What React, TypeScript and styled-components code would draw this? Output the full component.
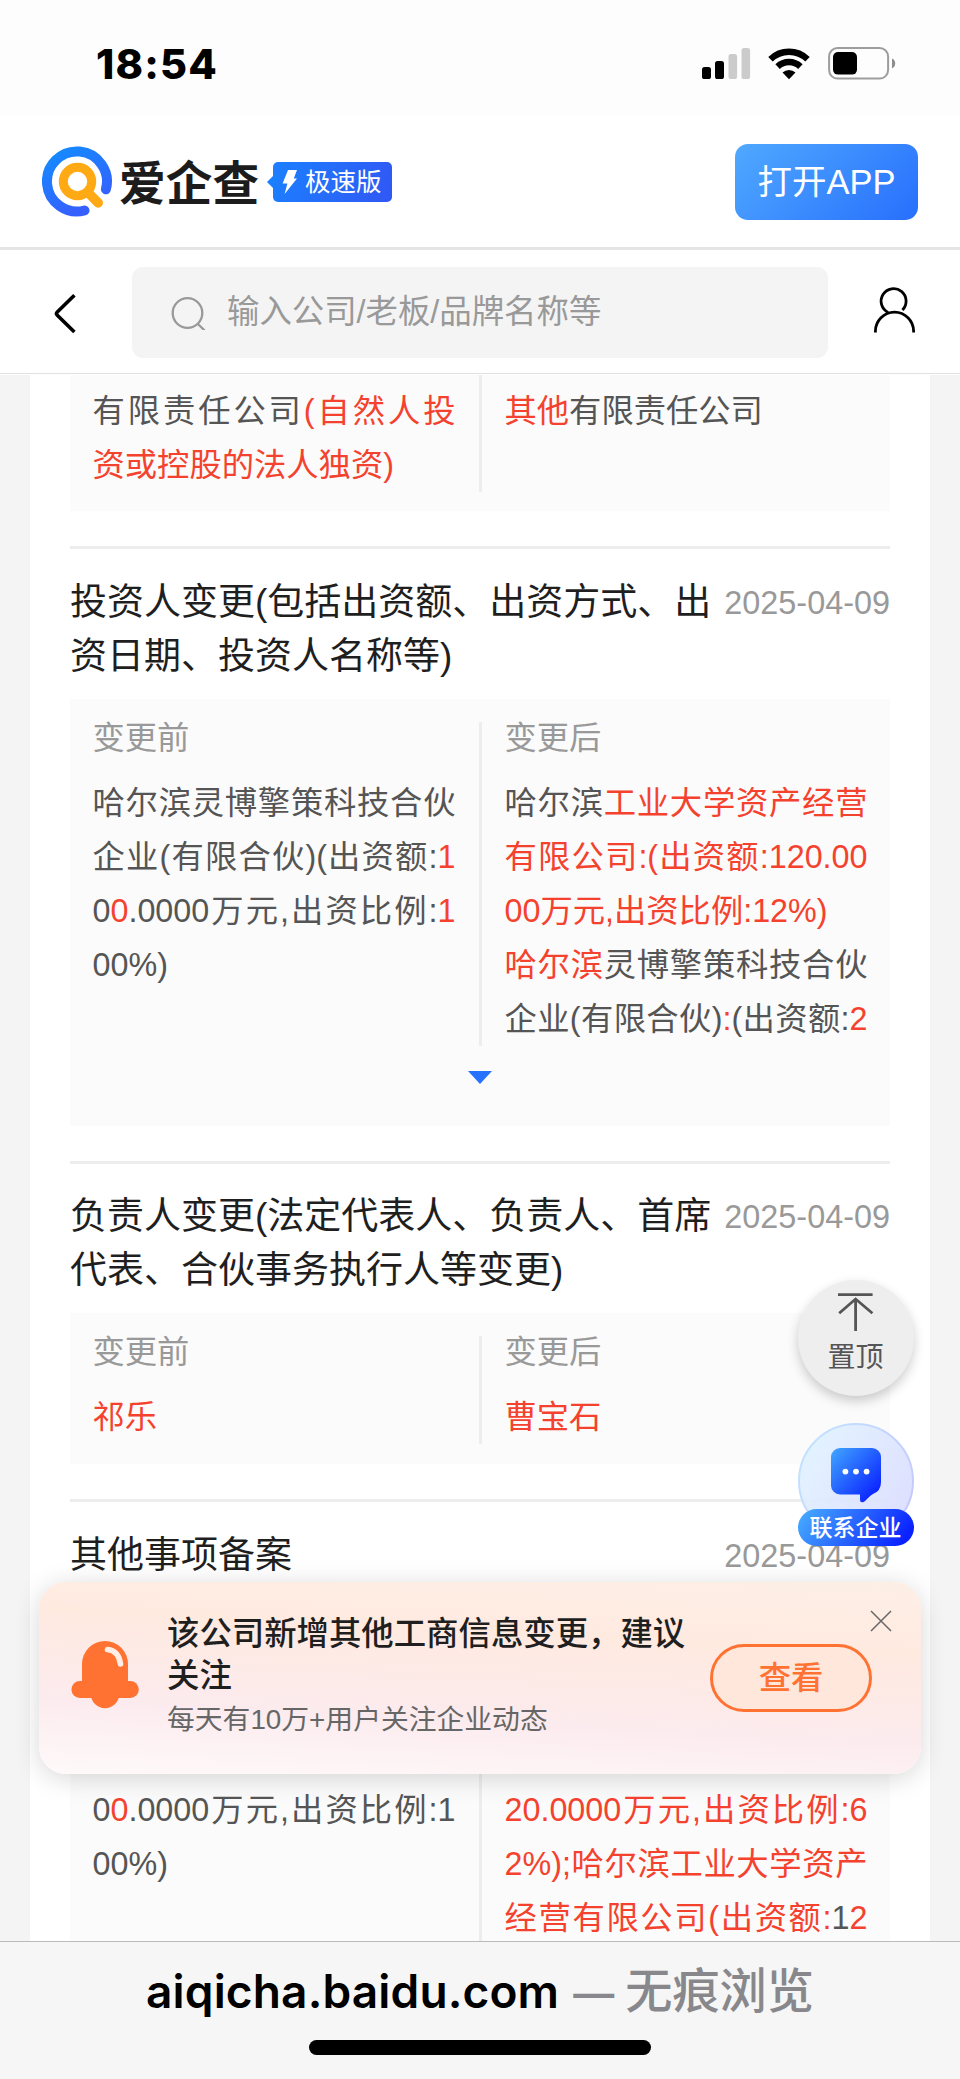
import React from "react";
import styled, { createGlobalStyle } from "styled-components";

const sans = `"Liberation Sans", "Noto Sans CJK SC", sans-serif`;

const GlobalStyle = createGlobalStyle`
  * { box-sizing: border-box; }
  body { margin: 0; background: #fff; font-family: ${sans}; }
`;

const Page = styled.div`
  position: relative;
  display: flex;
  flex-direction: column;
  width: 960px;
  height: 2079px;
  overflow: hidden;
  background: #fff;
`;

const StatusBar = styled.div`
  display: flex;
  align-items: flex-start;
  justify-content: space-between;
  height: 116px;
  padding: 39px 64px 0 96px;
  background: #fdfdfd;

  svg { margin-top: 6px; }
`;

const Clock = styled.div`
  font: 800 41.5px/50px Inter, sans-serif;
  letter-spacing: 1.2px;
  color: #000;
`;

const Header = styled.header`
  display: flex;
  align-items: center;
  justify-content: space-between;
  height: 134px;
  padding: 0 42px;
  border-bottom: 3px solid #e5e5e5;
`;

const Brand = styled.div`
  display: flex;
  align-items: center;
`;

const BrandName = styled.div`
  margin: -3px 0 0 6px;
  width: 145px;
  font: 700 46.7px/60px "Noto Sans CJK SC", sans-serif;
  color: #1c1c1c;
  white-space: nowrap;
`;

const Edition = styled.div`
  position: relative;
  display: flex;
  align-items: center;
  margin-left: 9px;
  width: 119px;
  height: 40px;
  padding-left: 9px;
  gap: 7px;
  border-radius: 5px;
  background: linear-gradient(110deg, #1b80ff, #3157f4);
  font: 400 25.5px/36px "Noto Sans CJK SC", sans-serif;
  color: #fff;
  white-space: nowrap;

  span { margin-top: -3px; }

  &::before {
    content: "";
    position: absolute;
    left: -6px;
    top: 13px;
    border: 7px solid transparent;
    border-left-width: 0;
    border-right: 7px solid #1b80ff;
  }
`;

const OpenApp = styled.button`
  width: 183px;
  height: 76px;
  padding: 0;
  border: 0;
  border-radius: 13px;
  background: linear-gradient(135deg, #50a9ff, #276ffd);
  font: 400 34.5px/76px ${sans};
  color: #fff;
`;

const SearchBar = styled.div`
  display: flex;
  align-items: center;
  height: 125px;
  padding: 1px 42px 0 50px;
  border-bottom: 1px solid #fff;
  box-shadow: inset 0 -1px 0 #e2e2e2;
`;

const SearchField = styled.div`
  display: flex;
  align-items: center;
  gap: 21px;
  width: 696px;
  height: 91px;
  margin-left: 51px;
  padding-left: 39px;
  border-radius: 11px;
  background: #f4f4f4;
  font-size: 32.4px;
  line-height: 89px;
  color: #999;
`;

const Profile = styled.div`
  display: flex;
  margin-left: auto;
  margin-bottom: 6px;
`;

const Main = styled.main`
  flex: 1;
  min-height: 0;
  overflow: hidden;
  padding: 0 30px;
  background: #f4f4f4;
`;

const Card = styled.div`
  height: 100%;
  padding: 0 40px;
  background: #fff;
`;

const Rule = styled.hr`
  margin: 35px 0 26.8px;
  height: 3px;
  border: 0;
  background: #ededed;
`;

const RecordHead = styled.div`
  display: flex;
  justify-content: space-between;
  margin-bottom: 14.5px;
`;

const RecordTitle = styled.h3`
  margin: 0;
  font-size: 37px;
  font-weight: 400;
  line-height: 54px;
  color: #1f1f1f;
  white-space: nowrap;
`;

const RecordDate = styled.time`
  height: 54px;
  font-size: 32.4px;
  line-height: 54px;
  color: #999;
`;

const Panel = styled.div<{ $top: number; $bottom?: number }>`
  padding: ${(p) => p.$top}px 22.5px ${(p) => p.$bottom ?? 20}px;
  background: #fbfbfb;
`;

const Columns = styled.div`
  display: grid;
  grid-template-columns: 363px 3px 363px;
  column-gap: 23px;
`;

const Divider = styled.div`
  background: #ededed;
`;

const Column = styled.div<{ $top?: number }>`
  padding-top: ${(p) => p.$top ?? 0}px;
`;

const ColumnLabel = styled.div`
  padding-top: 1px;
  margin-bottom: 22.4px;
  font-size: 32.3px;
  line-height: 31px;
  color: #999;
`;

const Line = styled.div<{ $fill?: boolean }>`
  height: 54px;
  font-size: 32.3px;
  line-height: 54px;
  color: #555;
  white-space: nowrap;
  text-align: justify;
  text-align-last: ${(p) => (p.$fill ? "justify" : "left")};
`;

const Hit = styled.em`
  font-style: normal;
  color: #f4422e;
`;

const ExpandArrow = styled.div`
  width: 0;
  margin: 25px auto 0;
  border: 12px solid transparent;
  border-top: 13px solid #2672ff;
  border-bottom-width: 0;
`;

const BottomBar = styled.footer`
  height: 138px;
  padding-top: 21px;
  border-top: 1px solid #bbb;
  background: #f6f6f6;
`;

const Address = styled.div`
  display: flex;
  justify-content: center;
  align-items: baseline;
  height: 58px;
  font: 600 46px/56px Inter, "Noto Sans CJK SC", sans-serif;
  color: #000;
  white-space: nowrap;
`;

const Domain = styled.span`
  letter-spacing: 0.15px;
`;

const Dash = styled.span`
  margin: 0 11px 0 14px;
  font-size: 41px;
  font-weight: 600;
  color: #88888c;
`;

const PrivateMode = styled.span`
  font-size: 47.2px;
  font-weight: 500;
  color: #88888c;
`;

const HomeIndicator = styled.div`
  width: 342px;
  height: 15px;
  margin: 19px auto 0;
  border-radius: 8px;
  background: #000;
`;

const BackToTop = styled.button`
  position: absolute;
  left: 798px;
  top: 1280px;
  display: flex;
  flex-direction: column;
  align-items: center;
  gap: 6px;
  width: 116px;
  height: 116px;
  padding: 12px 1px 0 0;
  border: 0;
  border-radius: 50%;
  background: #eee;
  box-shadow: 0 5px 12px rgba(0, 0, 0, 0.2);
  font: 400 28px/36px ${sans};
  color: #555;
`;

const Contact = styled.div`
  position: absolute;
  left: 798px;
  top: 1423px;
  width: 116px;
`;

const ContactPill = styled.div`
  position: relative;
  height: 37px;
  margin-top: -30px;
  padding-right: 1px;
  border-radius: 19px;
  background: linear-gradient(125deg, #45a8ff 5%, #0a22ff 90%);
  font: 500 23px/39px ${sans};
  text-align: center;
  color: #fff;
`;

const Banner = styled.aside`
  position: absolute;
  left: 39px;
  top: 1582px;
  display: flex;
  width: 882px;
  height: 192px;
  padding: 31px 0 0 32px;
  border-radius: 27px;
  background: linear-gradient(183deg, #fdefe6 0%, #ffeae0 30%, #fcebee 68%, #fef9fa 100%);
  box-shadow: 0 4px 26px rgba(0, 0, 0, 0.16);
`;

const BannerText = styled.div`
  width: 543px;
  margin-left: 27px;
`;

const BannerTitle = styled.div`
  font-size: 32.4px;
  font-weight: 500;
  line-height: 42px;
  color: #1f1f1f;
  white-space: nowrap;
`;

const BannerNote = styled.div`
  font-size: 27.8px;
  line-height: 46px;
  color: #666;
  white-space: nowrap;
`;

const ViewButton = styled.button`
  width: 162px;
  height: 68px;
  margin-top: 31px;
  padding: 0;
  border: 3px solid #ff7232;
  border-radius: 34px;
  background: #ffe7dc;
  font: 500 32.3px/62px ${sans};
  color: #ff7232;
`;

const Close = styled.button`
  position: absolute;
  right: 29px;
  top: 28px;
  display: flex;
  padding: 0;
  border: 0;
  background: none;
`;

const BannerIcon = styled.div`
  display: flex;
  margin-top: 27px;
`;

const StatusIcons = () => (
  <svg width="196" height="36" viewBox="700 45 196 36">
    <rect x="702" y="67" width="9" height="12" rx="2.6" />
    <rect x="715" y="61" width="9" height="18" rx="2.6" />
    <rect x="728.5" y="54" width="8.6" height="25" rx="2.6" fill="#cbcbcb" />
    <rect x="741.5" y="48" width="8.6" height="31" rx="2.6" fill="#cbcbcb" />
    <g fill="none" stroke="#000" strokeWidth="6.4">
      <path d="M770.5 59.2a26.6 26.6 0 0 1 37 0" />
      <path d="M777.6 66.6a16.4 16.4 0 0 1 22.8 0" />
    </g>
    <path d="M789 79.2l-6.5-6.6a9.4 9.4 0 0 1 13 0z" />
    <rect x="829.1" y="48" width="59" height="30.6" rx="8.5" fill="none" stroke="#9d9d9d" strokeWidth="2" />
    <rect x="833" y="52" width="24" height="22.6" rx="5" />
    <path d="M892 58.6q3.2 1.4 3.2 4.9t-3.2 4.9z" fill="#8d8d8d" />
  </svg>
);

const LogoMark = () => (
  <svg width="71" height="71" viewBox="41.5 146.5 71 71" fill="none" strokeLinecap="round">
    <defs>
      <linearGradient id="ring" x1="0" y1="0" x2="0.5" y2="1">
        <stop offset="0" stopColor="#138cff" />
        <stop offset="1" stopColor="#3560ff" />
      </linearGradient>
    </defs>
    <path d="M105.4 189.8A30 30 0 1 0 84 211" stroke="url(#ring)" strokeWidth="10" />
    <circle cx="77" cy="182" r="14.2" stroke="#ffaa14" strokeWidth="9" />
    <path d="M88.5 194l9.2 9.4" stroke="#ffaa14" strokeWidth="9.6" />
  </svg>
);

const Bolt = () => (
  <svg width="16" height="26" viewBox="0 0 16 26" fill="#fff">
    <path d="M6 1h9l-3.2 8.4H15L2.6 25l2.8-10.6H0.6z" />
  </svg>
);

const BackIcon = () => (
  <svg width="31" height="42" viewBox="50 292 31 42" fill="none" stroke="#000" strokeWidth="3.6">
    <path d="M74.4 295.2L57.3 312q-1.6 1.6 0 3.2L74.4 332" />
  </svg>
);

const SearchIcon = () => (
  <svg width="35" height="35" viewBox="170.5 295.5 35 35" fill="none" stroke="#999" strokeWidth="2.3">
    <circle cx="187" cy="313.5" r="14.8" />
    <path d="M196.800 324l7.200 6.800" />
  </svg>
);

const ProfileIcon = () => (
  <svg width="46" height="48" viewBox="872 285 46 48" fill="none" stroke="#000" strokeWidth="2.8">
    <path d="M902.4 309a12.5 12.5 0 1 0-14.2 2.4" />
    <path d="M875.4 331.6v-1.4a19 19 0 0 1 38.2 0v1.4" />
  </svg>
);

const TopIcon = () => (
  <svg width="38" height="42" viewBox="837 1292 38 42" fill="none" stroke="#555" strokeWidth="2.8">
    <path d="M838 1294.6h34.6M855.6 1331v-32.5M839.2 1313.2l16.4-14.2 16.8 14.2" />
  </svg>
);

const ContactIcon = () => (
  <svg width="116" height="116" viewBox="0 0 116 116" display="block">
    <defs>
      <linearGradient id="disc" x1="0" y1="0.2" x2="1" y2="0.8">
        <stop offset="0" stopColor="#e1f3ff" />
        <stop offset="1" stopColor="#dbdcff" />
      </linearGradient>
      <linearGradient id="rim" x1="0" y1="0.2" x2="1" y2="0.8">
        <stop offset="0" stopColor="#c3e3ff" />
        <stop offset="1" stopColor="#c5c8fc" />
      </linearGradient>
      <linearGradient id="bubble" x1="0" y1="0" x2="1" y2="1">
        <stop offset="0.05" stopColor="#3e9fff" />
        <stop offset="0.85" stopColor="#0c27ff" />
      </linearGradient>
    </defs>
    <circle cx="58" cy="58" r="57" fill="url(#disc)" fillOpacity="0.93" stroke="url(#rim)" strokeWidth="2" />
    <path
      d="M42 25h32a9 9 0 0 1 9 9v25q0 9-8 12-2 .8-5 4-3 3.5-5 4.2-3 .6-3-2.4v-5.300H42a9 9 0 0 1-9-9V34a9 9 0 0 1 9-9z"
      fill="url(#bubble)"
    />
    <g fill="#fff">
      <circle cx="47.4" cy="48.6" r="2.9" />
      <circle cx="58" cy="48.6" r="2.9" />
      <circle cx="68.6" cy="48.6" r="2.9" />
    </g>
  </svg>
);

const BellIcon = () => (
  <svg width="69" height="70" viewBox="71 1640 69 70" fill="#ff7232">
    <path d="M82 1690v-26a23 23 0 0 1 46 0v26z" />
    <rect x="71.4" y="1681" width="67.4" height="17" rx="8.5" />
    <circle cx="105" cy="1694" r="14.2" />
    <path d="M107.5 1649.5q11 1 13 14.5" fill="none" stroke="#ffeee6" strokeWidth="5.6" strokeLinecap="round" />
  </svg>
);

const CloseIcon = () => (
  <svg width="22" height="22" viewBox="0 0 22 22" fill="none" stroke="#666" strokeWidth="1.5">
    <path d="M1 1l20 20M21 1L1 21" />
  </svg>
);

export default function App() {
  return (
    <>
      <GlobalStyle />
      <Page>
        <StatusBar>
          <Clock>18:54</Clock>
          <StatusIcons />
        </StatusBar>

        <Header>
          <Brand>
            <LogoMark />
            <BrandName>爱企查</BrandName>
            <Edition>
              <Bolt />
              <span>极速版</span>
            </Edition>
          </Brand>
          <OpenApp>打开APP</OpenApp>
        </Header>

        <SearchBar>
          <BackIcon />
          <SearchField>
            <SearchIcon />
            输入公司/老板/品牌名称等
          </SearchField>
          <Profile>
            <ProfileIcon />
          </Profile>
        </SearchBar>

        <Main>
          <Card>
            <Panel $top={0} $bottom={19.4}>
              <Columns>
                <Column $top={9}>
                  <Line $fill>有限责任公司<Hit>(自然人投</Hit></Line>
                  <Line><Hit>资或控股的法人独资)</Hit></Line>
                </Column>
                <Divider />
                <Column $top={9}>
                  <Line><Hit>其他</Hit>有限责任公司</Line>
                </Column>
              </Columns>
            </Panel>

            <Rule />
            <RecordHead>
              <RecordTitle>
                投资人变更(包括出资额、出资方式、出
                <br />
                资日期、投资人名称等)
              </RecordTitle>
              <RecordDate>2025-04-09</RecordDate>
            </RecordHead>
            <Panel $top={23} $bottom={41.6}>
              <Columns>
                <Column>
                  <ColumnLabel>变更前</ColumnLabel>
                  <Line $fill>哈尔滨灵博擎策科技合伙</Line>
                  <Line $fill>企业(有限合伙)(出资额:<Hit>1</Hit></Line>
                  <Line $fill>0<Hit>0</Hit>.0000万元,出资比例:<Hit>1</Hit></Line>
                  <Line>00%)</Line>
                </Column>
                <Divider />
                <Column>
                  <ColumnLabel>变更后</ColumnLabel>
                  <Line $fill>哈尔滨<Hit>工业大学资产经营</Hit></Line>
                  <Line $fill><Hit>有限公司:(出资额:120.00</Hit></Line>
                  <Line><Hit>00万元,出资比例:12%)</Hit></Line>
                  <Line $fill><Hit>哈尔滨</Hit>灵博擎策科技合伙</Line>
                  <Line $fill>企业(有限合伙)<Hit>:</Hit>(出资额:<Hit>2</Hit></Line>
                </Column>
              </Columns>
              <ExpandArrow />
            </Panel>

            <Rule />
            <RecordHead>
              <RecordTitle>
                负责人变更(法定代表人、负责人、首席
                <br />
                代表、合伙事务执行人等变更)
              </RecordTitle>
              <RecordDate>2025-04-09</RecordDate>
            </RecordHead>
            <Panel $top={23} $bottom={19.6}>
              <Columns>
                <Column>
                  <ColumnLabel>变更前</ColumnLabel>
                  <Line><Hit>祁乐</Hit></Line>
                </Column>
                <Divider />
                <Column>
                  <ColumnLabel>变更后</ColumnLabel>
                  <Line><Hit>曹宝石</Hit></Line>
                </Column>
              </Columns>
            </Panel>

            <Rule />
            <RecordHead>
              <RecordTitle>其他事项备案</RecordTitle>
              <RecordDate>2025-04-09</RecordDate>
            </RecordHead>
            <Panel $top={0}>
              <Columns>
                <Column $top={186}>
                  <Line $fill>0<Hit>0</Hit>.0000万元,出资比例:1</Line>
                  <Line>00%)</Line>
                </Column>
                <Divider />
                <Column $top={186}>
                  <Line $fill><Hit>20.0000万元,出资比例:6</Hit></Line>
                  <Line $fill><Hit>2%);哈尔滨工业大学资产</Hit></Line>
                  <Line $fill><Hit>经营有限公司(出资额:</Hit>1<Hit>2</Hit></Line>
                </Column>
              </Columns>
            </Panel>
          </Card>
        </Main>

        <BottomBar>
          <Address>
            <Domain>aiqicha.baidu.com</Domain>
            <Dash>—</Dash>
            <PrivateMode>无痕浏览</PrivateMode>
          </Address>
          <HomeIndicator />
        </BottomBar>

        <BackToTop>
          <TopIcon />
          <span>置顶</span>
        </BackToTop>

        <Contact>
          <ContactIcon />
          <ContactPill>联系企业</ContactPill>
        </Contact>

        <Banner>
          <BannerIcon>
            <BellIcon />
          </BannerIcon>
          <BannerText>
            <BannerTitle>
              该公司新增其他工商信息变更，建议
              <br />
              关注
            </BannerTitle>
            <BannerNote>每天有10万+用户关注企业动态</BannerNote>
          </BannerText>
          <ViewButton>查看</ViewButton>
          <Close aria-label="关闭">
            <CloseIcon />
          </Close>
        </Banner>
      </Page>
    </>
  );
}
